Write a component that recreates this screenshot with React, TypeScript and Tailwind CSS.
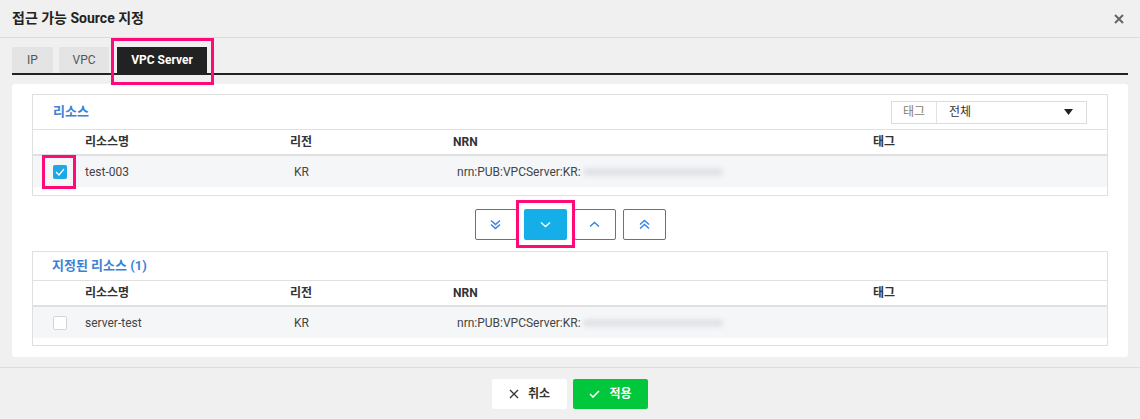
import React from 'react'

const font = { fontFamily: 'Roboto, "Noto Sans CJK KR", sans-serif' }

type Row = { name: string; region: string; checked: boolean }

function Check({ on }: { on: boolean }) {
  if (on) {
    return (
      <span className="flex h-[14px] w-[14px] items-center justify-center rounded-[2px] bg-[#1ea8e6]">
        <svg width="10" height="8" viewBox="0 0 10 8" fill="none">
          <path d="M1 4l3 3 5-6" stroke="white" strokeWidth="1.2" />
        </svg>
      </span>
    )
  }
  return <span className="block h-[14px] w-[14px] rounded-[2px] border border-[#d5d5d5] bg-white" />
}

function ResourceTable({ row, highlight }: { row: Row; highlight?: boolean }) {
  return (
    <div>
      <div className="flex h-[27px] items-center border-t border-b-2 border-[#e0e0e0] text-[12px] font-bold text-[#333]">
        <div className="w-[52px]" />
        <div className="w-[205px]">리소스명</div>
        <div className="w-[163px]">리전</div>
        <div className="w-[420px]">NRN</div>
        <div>태그</div>
      </div>
      <div className="flex h-[31px] items-center bg-[#f5f6f8] text-[12px] text-[#444]">
        <div className="relative flex w-[52px] justify-end pr-[18px]">
          <Check on={row.checked} />
          {highlight && (
            <span className="absolute left-[9px] top-[-10px] h-[34px] w-[34px] border-[3px] border-[#ff0a78]" />
          )}
        </div>
        <div className="w-[209px]">{row.name}</div>
        <div className="w-[163px]">{row.region}</div>
        <div className="flex w-[420px] items-center">
          <span>nrn:PUB:VPCServer:KR:</span>
          <span className="ml-[2px] h-[8px] w-[140px] rounded-[4px] bg-[#e1e3e7] blur-[2px]" />
        </div>
      </div>
    </div>
  )
}

function Chevrons({ dir, double, color }: { dir: 'up' | 'down'; double?: boolean; color: string }) {
  const d1 = dir === 'down' ? 'M1 1l4.5 4 4.5-4' : 'M1 5l4.5-4 4.5 4'
  return (
    <svg width="11" height={double ? 11 : 7} viewBox={`0 0 11 ${double ? 11 : 7}`} fill="none">
      <path d={d1} stroke={color} strokeWidth="1.4" transform="translate(0 0.5)" />
      {double && <path d={d1} stroke={color} strokeWidth="1.4" transform="translate(0 4.5)" />}
    </svg>
  )
}

export default function App() {
  return (
    <div className="h-[419px] w-[1140px] bg-[#f0f0f0]" style={font}>
      <div className="flex h-[38px] items-center justify-between border-b border-[#dcdcdc] px-3">
        <h1 className="text-[14px] font-bold text-[#222]">접근 가능 Source 지정</h1>
        <svg width="10" height="10" viewBox="0 0 10 10" className="mr-[4px]">
          <path d="M1 1l8 8M9 1l-8 8" stroke="#666" strokeWidth="2" />
        </svg>
      </div>

      <div className="px-3">
        <div className="flex h-[37px] items-end gap-[6px] border-b-2 border-[#222]">
          <div className="flex h-[26px] w-[41px] items-center justify-center bg-[#e4e4e4] text-[12px] text-[#555]">IP</div>
          <div className="flex h-[26px] w-[50px] items-center justify-center bg-[#e4e4e4] text-[12px] text-[#555]">VPC</div>
          <div className="relative ml-[2px] flex h-[26px] w-[90px] items-center justify-center bg-[#222] text-[12px] font-bold text-white">
            VPC Server
            <span className="absolute left-[-6px] top-[-9px] h-[47px] w-[103px] border-[3px] border-[#ff0a78]" />
          </div>
        </div>

        <div className="mt-[9px] rounded-[3px] bg-white px-5 pt-[10px] pb-[11px]">
          <div className="border border-[#e0e0e0] pb-[8px]">
            <div className="flex h-[34px] items-center justify-between pl-[20px] pr-[20px]">
              <span className="text-[13px] font-bold text-[#3b82d6]">리소스</span>
              <div className="flex h-[23px] border border-[#dcdcdc] text-[12px]">
                <span className="flex w-[45px] items-center justify-center border-r border-[#e3e3e3] text-[#8a7a6a]">태그</span>
                <span className="flex w-[149px] items-center justify-between pl-[12px] pr-[13px] text-[#333]">
                  전체
                  <svg width="9" height="6" viewBox="0 0 9 6"><path d="M0 0h9L4.5 6z" fill="#222" /></svg>
                </span>
              </div>
            </div>
            <ResourceTable row={{ name: 'test-003', region: 'KR', checked: true }} highlight />
          </div>

          <div className="flex h-[55px] items-center justify-center gap-[7px] pt-[1px]">
            <button className="flex h-[31px] w-[42px] items-center justify-center rounded-[2px] border border-[#2f80d4] bg-white">
              <Chevrons dir="down" double color="#3a80e0" />
            </button>
            <div className="relative">
              <button className="flex h-[31px] w-[43px] items-center justify-center rounded-[2px] bg-[#16aee8]">
                <Chevrons dir="down" color="white" />
              </button>
              <span className="absolute left-[-8px] top-[-9px] h-[48px] w-[59px] border-[3px] border-[#ff0a78]" />
            </div>
            <button className="flex h-[31px] w-[42px] items-center justify-center rounded-[2px] border border-[#2f80d4] bg-white">
              <Chevrons dir="up" color="#3a80e0" />
            </button>
            <button className="flex h-[31px] w-[43px] items-center justify-center rounded-[2px] border border-[#2f80d4] bg-white">
              <Chevrons dir="up" double color="#3a80e0" />
            </button>
          </div>

          <div className="border border-[#e0e0e0] pb-[7px]">
            <div className="flex h-[28px] items-center pl-[19px]">
              <span className="text-[13px] font-bold text-[#3b82d6]">지정된 리소스 (1)</span>
            </div>
            <ResourceTable row={{ name: 'server-test', region: 'KR', checked: false }} />
          </div>
        </div>
      </div>

      <div className="mt-[10px] flex h-[52px] items-center justify-center gap-[6px] border-t border-[#dcdcdc] pt-[1px]">
        <button className="flex h-[30px] w-[75px] items-center justify-center gap-[9px] rounded-[2px] bg-white text-[12px] font-bold text-[#333]">
          <svg width="10" height="10" viewBox="0 0 10 10"><path d="M1 1l8 8M9 1l-8 8" stroke="#333" strokeWidth="1.3" /></svg>
          취소
        </button>
        <button className="flex h-[30px] w-[75px] items-center justify-center gap-[9px] rounded-[2px] bg-[#00c73c] text-[12px] font-bold text-white">
          <svg width="11" height="8" viewBox="0 0 11 8" fill="none"><path d="M1 4l3 3 6-6" stroke="white" strokeWidth="1.6" /></svg>
          적용
        </button>
      </div>
    </div>
  )
}
